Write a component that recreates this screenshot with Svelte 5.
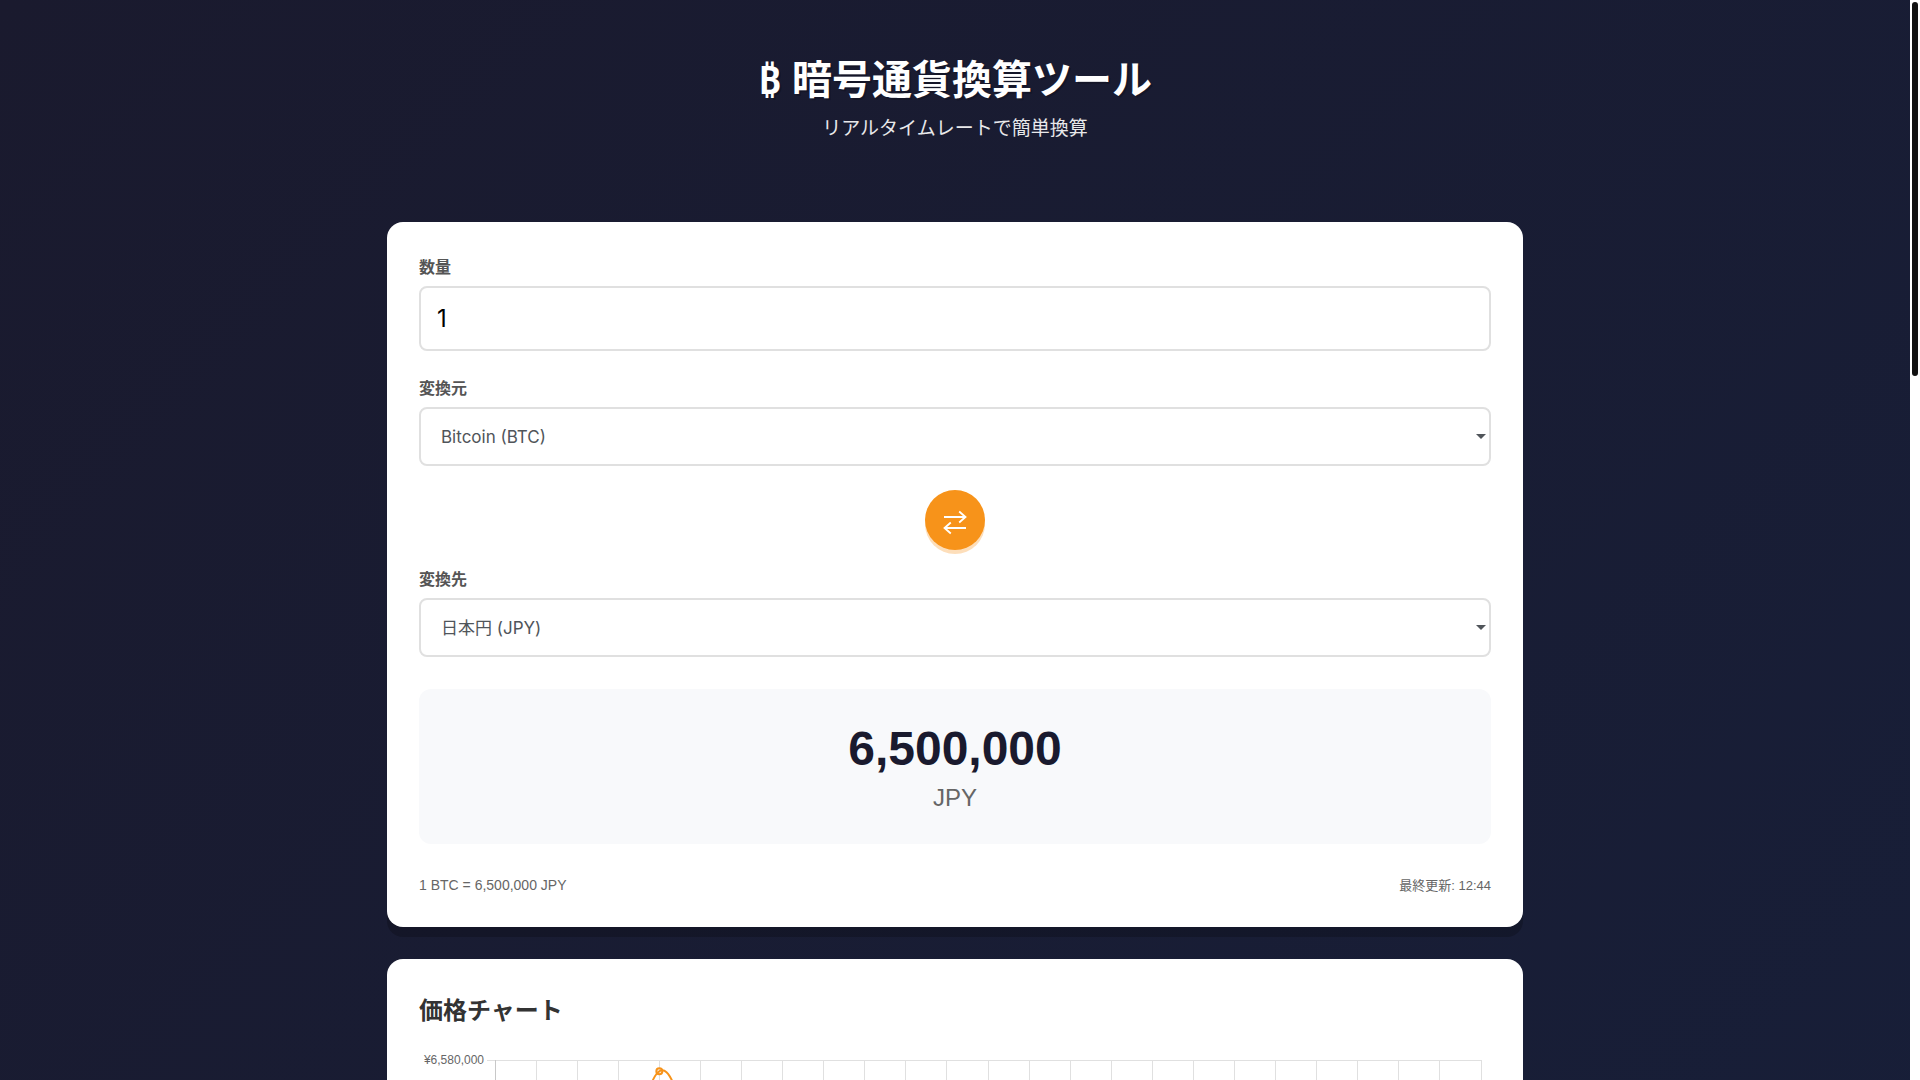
<script lang="ts">
	interface Currency {
		code: string;
		label: string;
		rate: number;
	}

	const currencies: Currency[] = [
		{ code: 'BTC', label: 'Bitcoin (BTC)', rate: 6500000 },
		{ code: 'JPY', label: '日本円 (JPY)', rate: 1 },
	];

	let amount = $state(1);
	let from = $state('BTC');
	let to = $state('JPY');
	let chartWidth = $state(1072);

	// custom scrollbar
	let viewHeight = $state(1080);
	let pageHeight = $state(3089);
	let scrollTop = $state(0);
	const thumbHeight = $derived((viewHeight / pageHeight) * 100);
	const thumbTop = $derived((scrollTop / pageHeight) * 100);

	const rateOf = (code: string) => currencies.find((c) => c.code === code)?.rate ?? 1;
	const format = (n: number) => n.toLocaleString('en-US', { maximumFractionDigits: 8 });

	const rate = $derived(rateOf(from) / rateOf(to));
	const result = $derived(format((amount || 0) * rate));

	function swap() {
		[from, to] = [to, from];
	}

	// 24 hour price series
	const prices = [
		6478000, 6492000, 6485000, 6510000, 6575000, 6532000, 6498000, 6471000, 6482000, 6505000,
		6519000, 6501000, 6476000, 6460000, 6473000, 6494000, 6512000, 6530000, 6517000, 6496000,
		6484000, 6490000, 6508000, 6515000, 6500000,
	];
	const ticks = [6580000, 6540000, 6500000, 6460000, 6420000];
	const chart = { height: 400, left: 76, right: 10, top: 10, bottom: 30 };

	const plotHeight = chart.height - chart.top - chart.bottom;
	const step = $derived((chartWidth - chart.left - chart.right) / (prices.length - 1));
	const xAt = (i: number) => chart.left + i * step;
	const yAt = (v: number) => chart.top + ((6580000 - v) / 160000) * plotHeight;

	const line = $derived.by(() => {
		const tension = 0.2;
		let d = `M${xAt(0)} ${yAt(prices[0])}`;
		for (let i = 0; i < prices.length - 1; i++) {
			const prev = prices[Math.max(i - 1, 0)];
			const next = prices[Math.min(i + 2, prices.length - 1)];
			const dy1 = (yAt(prices[i + 1]) - yAt(prev)) * tension;
			const dy2 = (yAt(next) - yAt(prices[i])) * tension;
			d += ` C${xAt(i) + step * 0.4} ${yAt(prices[i]) + dy1}`;
			d += ` ${xAt(i + 1) - step * 0.4} ${yAt(prices[i + 1]) - dy2}`;
			d += ` ${xAt(i + 1)} ${yAt(prices[i + 1])}`;
		}
		return d;
	});
</script>

{#snippet currencySelect(id: string, value: string, onpick: (code: string) => void)}
	<div class="select-wrap">
		<select {id} {value} onchange={(e) => onpick(e.currentTarget.value)}>
			{#each currencies as c}
				<option value={c.code}>{c.label}</option>
			{/each}
		</select>
		<svg class="arrow" viewBox="0 0 10 5" width="10" height="5">
			<path d="M0 0H10L5 5Z" />
		</svg>
	</div>
{/snippet}

<div class="app">
	<div
		class="scroller"
		bind:clientHeight={viewHeight}
		onscroll={(e) => (scrollTop = e.currentTarget.scrollTop)}
	>
		<div class="page" bind:clientHeight={pageHeight}>
			<header class="header">
				<h1><span class="coin">₿</span> 暗号通貨換算ツール</h1>
				<p>リアルタイムレートで簡単換算</p>
			</header>

			<main class="container">
				<section class="card">
					<div class="field">
						<label for="amount">数量</label>
						<input id="amount" type="number" min="0" bind:value={amount} />
					</div>

					<div class="field">
						<label for="from">変換元</label>
						{@render currencySelect('from', from, (code) => (from = code))}
					</div>

					<div class="swap-row">
						<button class="swap" type="button" aria-label="swap" onclick={swap}>
							<svg viewBox="0 0 24 24" width="24" height="24">
								<path d="M1 9H22.5M16.2 3.5L22.5 9L16.2 14.5M23 20H1.5M7.8 14.5L1.5 20L7.8 25.5" />
							</svg>
						</button>
					</div>

					<div class="field">
						<label for="to">変換先</label>
						{@render currencySelect('to', to, (code) => (to = code))}
					</div>

					<div class="result">
						<div class="result-value">{result}</div>
						<div class="result-unit">{to}</div>
					</div>

					<div class="rate-info">
						<span>1 {from} = {format(rate)} {to}</span>
						<span class="updated">最終更新: 12:44</span>
					</div>
				</section>

				<section class="card">
					<h2>価格チャート</h2>
					<div class="chart" bind:clientWidth={chartWidth}>
						<svg width={chartWidth} height={chart.height}>
							{#each ticks as tick}
								<line class="grid" x1={chart.left - 8} x2={chartWidth - chart.right} y1={yAt(tick)} y2={yAt(tick)} />
								<text x={chart.left - 11} y={yAt(tick) + 4}>¥{format(tick)}</text>
							{/each}
							{#each prices as _, i}
								<line class="grid" class:axis={i === 0} x1={xAt(i)} x2={xAt(i)} y1={chart.top} y2={chart.height - chart.bottom + 8} />
							{/each}
							<path class="line" d={line} />
							{#each prices as price, i}
								<circle cx={xAt(i)} cy={yAt(price)} r="3" />
							{/each}
						</svg>
					</div>
				</section>
			</main>
		</div>
	</div>
	<div class="track">
		<div class="thumb" style="top: {thumbTop}%; height: {thumbHeight}%"></div>
	</div>
</div>

<style>
	:global(body) {
		margin: 0;
	}

	.app {
		display: grid;
		grid-template-columns: 1fr 10px;
		height: 100vh;
		font-family: "Liberation Sans", "Noto Sans CJK JP", sans-serif;
	}

	.scroller {
		min-width: 0;
		overflow-y: auto;
		scrollbar-width: none;
	}

	.track {
		position: relative;
		background: #fff;
	}

	.thumb {
		position: absolute;
		width: 100%;
		box-sizing: border-box;
		background: #111;
		border: 2px solid #fff;
		border-radius: 5px;
	}

	.page {
		min-height: 286vh;
		background: linear-gradient(135deg, #1a1a2e 0%, #16213e 100%);
	}

	.header {
		padding: 48px 32px;
		text-align: center;
		color: #fff;
	}

	h1 {
		margin: 0 0 4px;
		font-size: 40px;
		line-height: 64px;
		text-shadow: 2px 2px 0 rgba(0, 0, 0, 0.2);
	}

	.coin {
		font-family: "Noto Sans", sans-serif;
		font-weight: 600;
		line-height: 1;
	}

	.header p {
		margin: 0;
		font-size: 19px;
		line-height: 26px;
		opacity: 0.9;
	}

	.container {
		max-width: 1200px;
		margin: 0 auto;
		padding: 32px;
		box-sizing: border-box;
	}

	.card {
		margin-bottom: 32px;
		padding: 32px;
		background: #fff;
		border-radius: 16px;
		box-shadow: 0 10px 0 rgba(0, 0, 0, 0.2);
	}

	.field {
		display: flex;
		flex-direction: column;
		gap: 4px;
		margin-bottom: 24px;
	}

	label {
		font-size: 16px;
		font-weight: 600;
		line-height: 28px;
		color: #555;
	}

	input,
	select {
		display: block;
		width: 100%;
		box-sizing: border-box;
		border: 2px solid #e0e0e0;
		border-radius: 8px;
		background: #fff;
		font-family: Inter, "Noto Sans CJK JP", sans-serif;
	}

	input {
		height: 65px;
		padding: 16px;
		font-size: 24px;
		color: #000;
		appearance: textfield;
	}

	.select-wrap {
		position: relative;
	}

	select {
		height: 59px;
		padding: 16px 20px;
		font-size: 17px;
		color: #50555a;
		appearance: none;
	}

	.arrow {
		position: absolute;
		top: 27px;
		right: 5px;
		fill: #50555a;
		pointer-events: none;
	}

	.swap-row {
		display: flex;
		justify-content: center;
		margin-bottom: 16px;
	}

	.swap {
		display: flex;
		align-items: center;
		justify-content: center;
		width: 60px;
		height: 60px;
		padding: 0;
		border: none;
		border-radius: 50%;
		background: #f7931a;
		box-shadow: 0 4px 0 rgba(247, 147, 26, 0.3);
		cursor: pointer;
	}

	.swap svg {
		overflow: visible;
	}

	.swap path {
		fill: none;
		stroke: #fff;
		stroke-width: 1.8;
	}

	.result {
		margin-top: 32px;
		padding: 32px;
		background: #f8f9fb;
		border-radius: 12px;
		text-align: center;
	}

	.result-value {
		margin-bottom: 8px;
		font-size: 48px;
		font-weight: 700;
		line-height: 55px;
		color: #1a1a2e;
	}

	.result-unit {
		font-size: 24px;
		line-height: 28px;
		color: #666;
	}

	.rate-info {
		display: flex;
		align-items: center;
		justify-content: space-between;
		margin-top: 32px;
		font-size: 14px;
		line-height: 19px;
		color: #666;
	}

	.updated {
		font-size: 13px;
	}

	h2 {
		margin: 0 0 20px;
		font-size: 24px;
		line-height: 39px;
		color: #333;
	}

	.chart svg {
		display: block;
	}

	.chart text {
		font-size: 12px;
		text-anchor: end;
		fill: #666;
	}

	.grid {
		stroke: #e0e0e0;
		shape-rendering: crispEdges;
	}

	.axis {
		stroke: #c8c8c8;
	}

	.line {
		fill: none;
		stroke: #f7931a;
		stroke-width: 2;
	}

	circle {
		fill: rgba(247, 147, 26, 0.1);
		stroke: #f7931a;
		stroke-width: 2;
	}
</style>
